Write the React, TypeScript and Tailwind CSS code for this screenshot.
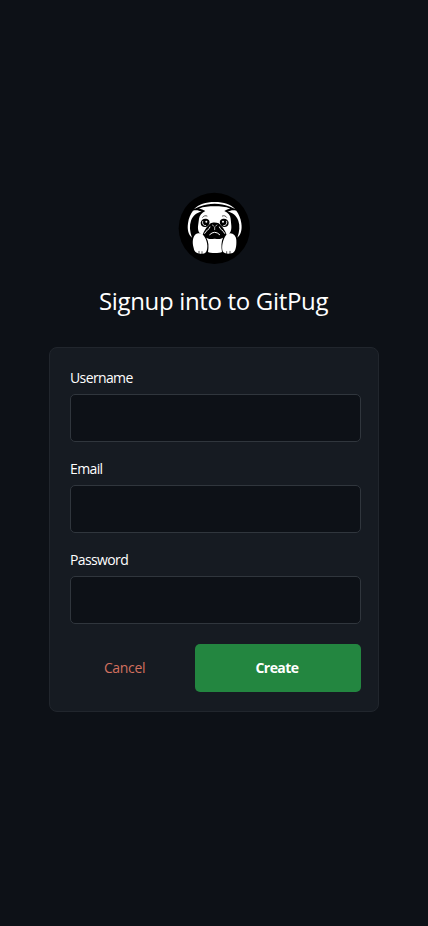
import React from "react";

function PugLogo() {
  return (
    <svg viewBox="12 12 216 216" className="h-[72px] w-[72px]" role="img" aria-label="GitPug">
      <circle cx="121" cy="121" r="107" fill="#000" />
      <g fill="#fff">
        <path d="M60 64C74 48 95 42 122 42C150 42 170 48 184 64C177 59 170 57 164 55C152 50 139 47 122 47C105 47 92 50 80 55C74 57 67 59 60 64Z" />
        <path d="M57 68C66 65 75 67 83 71C68 73 57 82 51 98C46 112 47 130 54 149C44 142 39 126 42 106C44 90 50 77 57 68Z" />
        <path d="M187 68C178 65 169 67 161 71C176 73 187 82 193 98C198 112 197 130 190 149C200 142 205 126 202 106C200 90 194 77 187 68Z" />
        <path d="M75 62C89 56 104 55 122 55C140 55 155 56 169 62C162 63 156 65 151 69C163 74 169 82 170 92L172 113C173 128 168 138 158 141C154 128 143 113 134 106C127 103 115 103 110 106C101 113 90 128 86 141C76 138 71 130 72 115L75 92C77 82 83 74 94 69C88 65 82 63 75 62Z" />
        <path d="M76 136C90 138 99 155 100 173C100 186 98 196 86 197C72 198 61 194 59 180C54 162 56 146 66 138C69 136 72 135 76 136Z" />
        <path d="M168 136C179 136 187 146 187 157C188 175 185 191 176 195C164 199 150 198 146 190C142 176 147 153 156 142C159 138 163 136 168 136Z" />
        <path d="M97 149C106 155 113 152 122 152C131 152 138 155 147 149C142 160 141 176 144 192C137 196 108 196 102 192C105 175 104 160 97 149Z" />
      </g>
      <g fill="#000">
        <path d="M80 104C82 92 96 89 105 97C109 104 105 113 98 116C89 119 80 115 80 104Z" />
        <path d="M164 104C162 92 148 89 139 97C135 104 139 113 146 116C155 119 164 115 164 104Z" />
      </g>
      <g fill="none" stroke="#fff" strokeLinecap="round">
        <path d="M86 100C84 108 88 113 95 113M158 100C160 108 156 113 149 113" strokeWidth="2.5" />
        <path d="M107 140Q122 125 137 140" strokeWidth="3" />
        <path d="M108 117C107 125 96 126 92 136M136 117C137 125 148 126 152 136" strokeWidth="3" />
        <path d="M115 111l4 3M129 111l-4 3M122 117v8" strokeWidth="2" />
      </g>
      <circle cx="97" cy="101" r="3" fill="#fff" />
      <circle cx="147" cy="101" r="3" fill="#fff" />
      <g fill="none" stroke="#000" strokeWidth="2" strokeLinecap="round">
        <path d="M86 88C89 83 95 82 99 84M158 88C155 83 149 82 145 84" />
        <path d="M75 197v-7M84 198v-7M158 198v-7M168 197v-7" />
      </g>
    </svg>
  );
}

function Field({ label, type }: { label: string; type: string }) {
  return (
    <label className="flex flex-col">
      <span className="h-[26px] text-sm leading-5 tracking-[-0.62px]">{label}</span>
      <input
        type={type}
        className="h-12 w-full rounded-[5px] border border-[#30363d] bg-[#0d1117] px-3 text-sm outline-none"
      />
    </label>
  );
}

export default function App() {
  return (
    <main className="flex min-h-screen flex-col items-center bg-[#0d1117] pt-[192px] font-['Open_Sans',sans-serif] text-white">
      <PugLogo />
      <h1 className="mt-[21px] mr-px text-2xl leading-8 tracking-[-0.33px] whitespace-nowrap">Signup into to GitPug</h1>
      <form className="mt-[30px] flex h-[365px] w-[330px] flex-col gap-[17px] rounded-lg border border-[#21262d] bg-[#161b22] pt-5 pr-[17px] pl-5">
        <Field label="Username" type="text" />
        <Field label="Email" type="email" />
        <Field label="Password" type="password" />
        <div className="mt-[3px] flex h-12 gap-4">
          <button type="button" className="w-[109px] text-sm tracking-[-0.35px] text-[#d2705f]">
            Cancel
          </button>
          <button type="button" className="flex-1 rounded-[5px] bg-[#238640] pr-0.5 text-sm font-bold tracking-[-0.55px]">
            Create
          </button>
        </div>
      </form>
    </main>
  );
}
